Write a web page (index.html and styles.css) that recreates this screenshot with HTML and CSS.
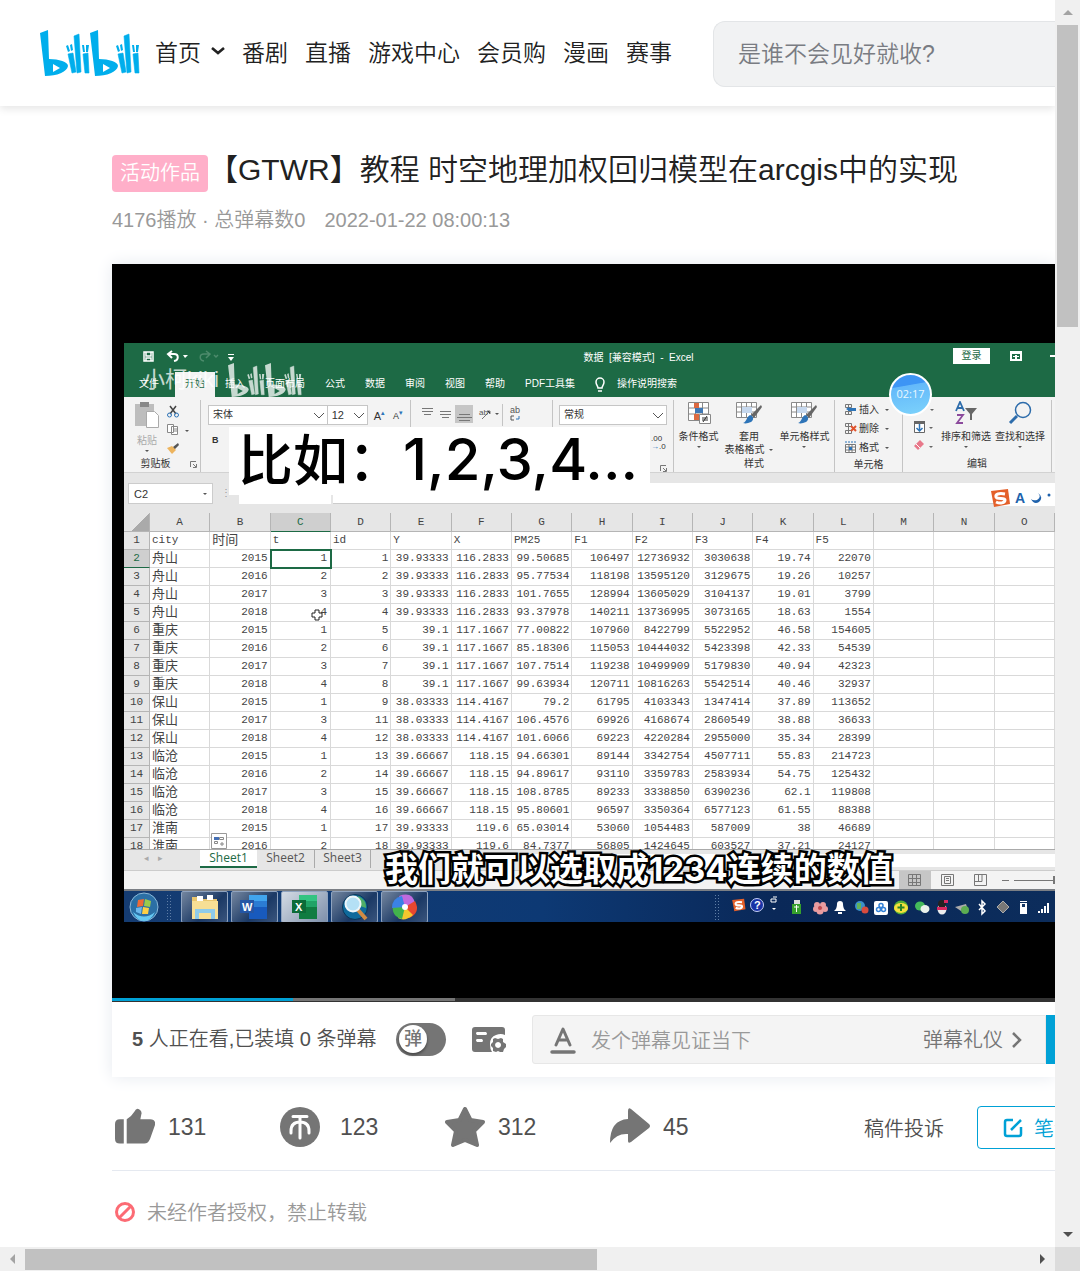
FILE: index.html
```html
<!DOCTYPE html>
<html lang="zh-CN">
<head>
<meta charset="utf-8">
<title>【GTWR】教程 时空地理加权回归模型在arcgis中的实现</title>
<link rel="stylesheet" href="styles.css">
</head>
<body>
<svg class="defs" aria-hidden="true">
  <symbol id="half-logo" viewBox="0 0 50 46">
    <path fill-rule="evenodd" d="M0 3 8 0 9 29C19 29 28 32 28 36 27 42 17 46 5 46ZM13 34v8l7-4Z"/>
    <path stroke="currentColor" stroke-width=".6" d="m28 24 5-1 3 19-4 1ZM34 6l5-2 2 38-4 1ZM43 24l5-1 1 20h-4Z"/>
    <path d="m26 16 2-1 2 6-2 1ZM30 15l2-1 1 6-2 1ZM42 15h2l1 7h-2ZM46 15h3l-1 7h-2Z"/>
  </symbol>
  <symbol id="logo" viewBox="0 0 100 46">
    <use href="#half-logo" width="50" height="46"/>
    <use href="#half-logo" x="50" width="50" height="46"/>
  </symbol>
  <symbol id="sogou" viewBox="0 0 20 20">
    <path fill="#e4602a" d="M1 3 18 1l2 15-16 3Z"/>
    <path fill="none" stroke="#fff" stroke-width="3" d="M15 6C9 5 5 6 6 9s9 0 9 3-5 4-9 2"/>
  </symbol>
  <symbol id="table-brush" viewBox="0 0 28 24">
    <path fill="#fff" stroke="#8a8a8a" d="M1.500 1.500h20v15h-20zM1 6h21M1 11h21M6.500 1v15M11.500 1v15M16.500 1v15"/>
    <path fill="#c6d8ee" d="M7 6h10v6H7z"/>
    <path fill="#666" d="m26 4 1 2-8 11-3-3Z"/><path fill="#2d74b8" d="M15 14c4 1 4 5 1 7-3 1-5 2-8 1 4-1 3-6 7-8Z"/>
  </symbol>
</svg>
<div class="window">
  <div class="viewport">
    <header class="site-header">
      <a class="logo" href="#" aria-label="bilibili"><svg width="100" height="46"><use href="#logo"/></svg></a>
      <nav class="nav">
        <a class="home" href="#">首页 <svg width="14" height="10" viewBox="0 0 14 10"><path d="m1 2 6 5 6-5" fill="none" stroke="#222" stroke-width="2.600"/></svg></a>
        <a href="#">番剧</a><a href="#">直播</a><a href="#">游戏中心</a><a href="#">会员购</a><a href="#">漫画</a><a href="#">赛事</a>
      </nav>
      <input class="search" type="text" placeholder="是谁不会见好就收?" aria-label="搜索">
    </header>
    <main>
      <h1><span class="tag">活动作品</span><span>【GTWR】教程 时空地理加权回归模型在arcgis中的实现</span></h1>
      <p class="meta"><span>4176播放 · 总弹幕数0</span><span>2022-01-22 08:00:13</span></p>
      <section class="player">
        <div class="video">
          <div class="screen">
            <div class="xl-title">
              <svg width="110" height="26" viewBox="0 0 110 26" fill="none" stroke="#fff" stroke-width="1.500">
                <path d="M20 9h9v9h-9zM22 9v4h5V9M22 18v-3h5v3"/>
                <path d="m48 8-4 3 4 4M44 11h6c5 0 5 6 0 7" stroke-width="2"/>
                <path fill="#fff" stroke="none" d="M59 12h5l-3 3zM104 14h6l-3 4zM104 11h6v1h-6z"/>
                <path stroke="#4d8b6c" d="m82 8 4 3-4 4M86 11h-6c-5 0-5 6 0 7M90 12l2 2 2-2"/>
              </svg>
              <span class="xl-name">数据&nbsp; [兼容模式] &nbsp;-&nbsp; Excel</span>
              <span class="xl-login">登录</span>
              <svg width="46" height="14" viewBox="0 0 46 14"><path fill="#fff" d="M1 2h12v10H1zM41 6h5v2h-5z"/><path fill="#1d6a45" d="M3 5h8v5H3z"/><path fill="#fff" d="M4 7h6v1H4zM6 6h2v4H6z"/></svg>
            </div>
            <div class="xl-tabs">
              <span class="file">文件</span><span class="on">开始</span><span>插入</span><span>页面布局</span><span>公式</span><span>数据</span><span>审阅</span><span>视图</span><span>帮助</span><span>PDF工具集</span>
              <svg width="22" height="16" viewBox="0 0 22 16" fill="none" stroke="#fff" stroke-width="1.500"><path d="M13 11c0-2-2-3-2-6a4 4 0 0 1 8 0c0 3-2 4-2 6ZM13 14h4"/></svg>
              <span>操作说明搜索</span>
            </div>
            <div class="ribbon">
              <div class="group clip">
                <div class="body">
                  <div class="big"><svg width="26" height="28" viewBox="0 0 26 28"><path fill="#bdbdbd" d="M1 3h19v22H1z"/><path fill="#888" d="M6 1h9v5H6z"/><path fill="#fff" stroke="#aaa" d="M12.500 10.500h8l4 4v12h-12z"/></svg><span class="dim">粘贴</span><i class="caret"></i></div>
                  <svg class="icons" width="24" height="54" viewBox="0 0 24 54"><g fill="none" stroke="#2d74b8"><path stroke="#444" stroke-width="1.500" d="m4 2 6 8M10 2 4 10"/><circle cx="3.500" cy="11" r="2"/><circle cx="10.500" cy="11" r="2"/></g><path fill="#fff" stroke="#888" d="M1.500 20.500h6v8h-6zM5.500 22.500h6v8h-6z"/><path stroke="#888" d="M7 25h4M7 27h4"/><path fill="#555" d="M19 26h4l-2 2zM7 43l5-4 1 2-5 5Z"/><path fill="#edb45e" d="m1 44 5-2 4 4-4 4Z"/></svg>
                </div>
                <div class="label">剪贴板<svg width="7" height="7" viewBox="0 0 7 7" fill="none" stroke="#777"><path d="M.5 6V.5H6M3 3l3 3M6.500 3v3.500H3"/></svg></div>
              </div>
              <div class="group font">
                <div class="line">
                  <span class="select w-font">宋体</span><span class="select w-size">12</span>
                  <b class="grow">A<sup>▴</sup></b><b class="shrink">A<sup>▾</sup></b>
                </div>
                <b class="bold">B</b>
              </div>
              <div class="group align">
                <svg width="90" height="24" viewBox="0 0 90 24"><path fill="#c6c6c6" d="M43 3h18v18H43z"/><g stroke="#777"><path d="M10 6.500h11M10 9.500h11M12 12.500h7M28 9.500h11M28 12.500h11M30 15.500h7M47 12.500h11M45 15.500h15M47 18.500h11"/><path d="m70 17 8-8m-3 0h3v3" /></g><text x="67" y="13" font-size="8" fill="#555">ab</text><path fill="#555" d="M83 11h4l-2 2z"/></svg>
                <svg class="wrap-icon" width="24" height="24" viewBox="0 0 24 24"><path stroke="#c4c4c4" d="M.5 2v22"/><text x="8" y="11" font-size="9" fill="#555">ab</text><path fill="none" stroke="#555" d="M12 14H9v4h3"/><path fill="none" stroke="#2d74b8" d="M17 14v3h-3"/></svg>
              </div>
              <div class="group number">
                <span class="select">常规</span>
                <div class="decimals"><span>.00<br><i>→</i>.0</span></div>
                <svg class="launcher" width="7" height="7" viewBox="0 0 7 7" fill="none" stroke="#777"><path d="M.5 6V.5H6M3 3l3 3M6.500 3v3.500H3"/></svg>
              </div>
              <div class="group styles">
                <div class="body">
                  <div class="big"><svg width="26" height="24" viewBox="0 0 26 24"><path fill="#fff" stroke="#888" d="M2.500 1.500h20v18h-20zM2 7h21M2 13h21M9.500 1v18M16.500 1v18"/><path fill="#dc6a41" d="M8 2h5v5H8zM8 13h5v6H8z"/><path fill="#3f78b5" d="M9 7h8v5H9z"/><path fill="#fff" stroke="#888" d="M13.500 13.500h11v9h-11z"/><path stroke="#333" d="M16 17h6M16 19h6M21 15l-4 6"/></svg><span>条件格式</span><i class="caret"></i></div>
                  <div class="big"><svg width="28" height="24"><use href="#table-brush"/></svg><span>套用</span><span>表格格式 <i class="caret"></i></span></div>
                  <div class="big"><svg width="28" height="24"><use href="#table-brush"/></svg><span>单元格样式</span><i class="caret"></i></div>
                </div>
                <div class="label">样式</div>
              </div>
              <div class="group cells">
                <div class="stack">
                  <span><svg width="13" height="13" viewBox="0 0 13 13"><path fill="none" stroke="#777" d="M1.500 1.500h6v3h-6zM1.500 8.500h6v3h-6zM4.500 1v3M4.500 8v3"/><path fill="#2d74b8" d="M2 6l3-2v4zM4 5h8v3H4z"/></svg>插入<i class="caret"></i></span>
                  <span><svg width="13" height="13" viewBox="0 0 13 13"><path fill="none" stroke="#777" d="M1.500 1.500h6v3h-6zM1.500 8.500h6v3h-6zM4.500 1v10"/><path stroke="#e0532d" stroke-width="2" d="m7 4 5 5m0-5-5 5"/></svg>删除<i class="caret"></i></span>
                  <span><svg width="13" height="13" viewBox="0 0 13 13"><path fill="#fff" stroke="#777" d="M1.500 3.500h10v8h-10zM2 6h9M2 9h9M5 3v8M8 3v8"/><path stroke="#2d74b8" stroke-dasharray="2 1" d="M1 1h11"/><path fill="#2d74b8" d="M5 6h3v3H5z"/></svg>格式<i class="caret"></i></span>
                </div>
                <div class="label">单元格</div>
              </div>
              <div class="group edit">
                <div class="body">
                  <svg class="tools" width="34" height="56" viewBox="0 0 34 56"><path fill="#fff" stroke="#666" d="M11.500 20.500h10v11h-10z"/><path fill="#666" d="M11 20h11v3H11zM27 8h4l-2 2zM26 26h4l-2 2zM26 45h4l-2 2z"/><path fill="none" stroke="#2d74b8" stroke-width="1.500" d="M16.500 23v6m-3-2 3 3 3-3"/><path fill="#e8788a" d="m11 45 6-6 4 4-6 6z"/><path stroke="#fff" d="m13 43 4 4"/></svg>
                  <div class="big"><svg width="24" height="24" viewBox="0 0 24 24" fill="none" stroke-width="1.800"><path stroke="#2d6cab" d="m2 10 4-9 4 9M3 7h6"/><path stroke="#8b4a9c" d="M3 14h6l-6 8h6"/><path fill="#666" d="M11 7h12l-5 6v6h-2v-6z"/></svg><span>排序和筛选</span><i class="caret"></i></div>
                  <div class="big"><svg width="24" height="24" viewBox="0 0 24 24" fill="none" stroke="#2d6cab"><circle cx="15" cy="9" r="7.500" stroke-width="1.500"/><path stroke-width="3" d="m9 15-7 7"/></svg><span>查找和选择</span><i class="caret"></i></div>
                </div>
                <div class="label">编辑</div>
              </div>
            </div>
            <div class="formula"><span class="cell-name">C2<i class="caret"></i></span><span class="dots">⋮</span><span class="fx"></span><span class="value"></span></div>
            <div class="sheet">
              <table>
                <thead><tr><th class="corner"><th>A<th>B<th class="sel">C<th>D<th>E<th>F<th>G<th>H<th>I<th>J<th>K<th>L<th>M<th>N<th>O</thead>
                <tbody>
                <tr class="names"><th>1<td>city<td class="zh">时间<td>t<td>id<td>Y<td>X<td>PM25<td>F1<td>F2<td>F3<td>F4<td>F5<td><td><td>
                <tr><th class="sel">2<td>舟山<td>2015<td class="picked">1<td>1<td>39.93333<td>116.2833<td>99.50685<td>106497<td>12736932<td>3030638<td>19.74<td>22070<td><td><td>
                <tr><th>3<td>舟山<td>2016<td>2<td>2<td>39.93333<td>116.2833<td>95.77534<td>118198<td>13595120<td>3129675<td>19.26<td>10257<td><td><td>
                <tr><th>4<td>舟山<td>2017<td>3<td>3<td>39.93333<td>116.2833<td>101.7655<td>128994<td>13605029<td>3104137<td>19.01<td>3799<td><td><td>
                <tr><th>5<td>舟山<td>2018<td>4<td>4<td>39.93333<td>116.2833<td>93.37978<td>140211<td>13736995<td>3073165<td>18.63<td>1554<td><td><td>
                <tr><th>6<td>重庆<td>2015<td>1<td>5<td>39.1<td>117.1667<td>77.00822<td>107960<td>8422799<td>5522952<td>46.58<td>154605<td><td><td>
                <tr><th>7<td>重庆<td>2016<td>2<td>6<td>39.1<td>117.1667<td>85.18306<td>115053<td>10444032<td>5423398<td>42.33<td>54539<td><td><td>
                <tr><th>8<td>重庆<td>2017<td>3<td>7<td>39.1<td>117.1667<td>107.7514<td>119238<td>10499909<td>5179830<td>40.94<td>42323<td><td><td>
                <tr><th>9<td>重庆<td>2018<td>4<td>8<td>39.1<td>117.1667<td>99.63934<td>120711<td>10816263<td>5542514<td>40.46<td>32937<td><td><td>
                <tr><th>10<td>保山<td>2015<td>1<td>9<td>38.03333<td>114.4167<td>79.2<td>61795<td>4103343<td>1347414<td>37.89<td>113652<td><td><td>
                <tr><th>11<td>保山<td>2017<td>3<td>11<td>38.03333<td>114.4167<td>106.4576<td>69926<td>4168674<td>2860549<td>38.88<td>36633<td><td><td>
                <tr><th>12<td>保山<td>2018<td>4<td>12<td>38.03333<td>114.4167<td>101.6066<td>69223<td>4220284<td>2955000<td>35.34<td>28399<td><td><td>
                <tr><th>13<td>临沧<td>2015<td>1<td>13<td>39.66667<td>118.15<td>94.66301<td>89144<td>3342754<td>4507711<td>55.83<td>214723<td><td><td>
                <tr><th>14<td>临沧<td>2016<td>2<td>14<td>39.66667<td>118.15<td>94.89617<td>93110<td>3359783<td>2583934<td>54.75<td>125432<td><td><td>
                <tr><th>15<td>临沧<td>2017<td>3<td>15<td>39.66667<td>118.15<td>108.8785<td>89233<td>3338850<td>6390236<td>62.1<td>119808<td><td><td>
                <tr><th>16<td>临沧<td>2018<td>4<td>16<td>39.66667<td>118.15<td>95.80601<td>96597<td>3350364<td>6577123<td>61.55<td>88388<td><td><td>
                <tr><th>17<td>淮南<td>2015<td>1<td>17<td>39.93333<td>119.6<td>65.03014<td>53060<td>1054483<td>587009<td>38<td>46689<td><td><td>
                <tr><th>18<td>淮南<td>2016<td>2<td>18<td>39.93333<td>119.6<td>84.7377<td>56805<td>1424645<td>603527<td>37.21<td>24127<td><td><td>
                </tbody>
              </table>
            </div>
            <div class="sheet-tabs"><span class="arrows">◂&emsp;▸</span><span class="on">Sheet1</span><span>Sheet2</span><span class="bar">Sheet3</span><span class="hscroll"></span></div>
            <div class="status">
              <svg width="156" height="18" viewBox="0 0 156 18" fill="none" stroke="#777"><path fill="#c6c6c6" stroke="none" d="M0 0h32v18H0z"/><path d="M9.500 3.500h12v11h-12zM9 7.500h12M9 11.500h12M13.500 3v11M17.500 3v11M42.500 3.500h12v11h-12zM45.500 5.500h6v7h-6zM47 7.500h3M47 9.500h3M75.500 3.500h12v11h-12zM75 10.500h8v-7M79.500 3v7M103 9.500h7M115 9.500h41"/><path stroke-width="2" d="M155 5v8"/></svg>
            </div>
            <div class="taskbar">
              <svg class="start" width="42" height="32" viewBox="0 0 42 32"><circle cx="20" cy="16" r="14" fill="#2b6fa5" stroke="#8bb8d8"/><path fill="#64c8f2" d="M9 21q11 9 22 0-4 9-11 9T9 21"/><path fill="#ef6a35" d="m14 9 6-1-1 7-6 1z"/><path fill="#9bcb4a" d="m21 8 6 2-1 6-6-1z"/><path fill="#6cb8ec" d="m12 17 6-1-1 7-5-2z"/><path fill="#fbcf45" d="m19 16 6 1-1 6-6 0z"/></svg>
              <span class="grip"></span>
              <span class="app"><svg width="32" height="28" viewBox="0 0 32 28"><path fill="#e9c66e" d="M3 4h7l2 2h16v20H3z"/><path fill="#fff" d="M8 3h6v5H8zM18 2h6v5h-6z"/><path fill="#f7df95" d="M3 8h26v18H3z"/><path fill="#8ecbea" d="M6 26V16h20v10h-4v-6H10v6z"/></svg></span>
              <span class="app"><svg width="32" height="28" viewBox="0 0 32 28"><path fill="#41a5ee" d="M10 2h18v6H10z"/><path fill="#2b7cd3" d="M10 8h18v6H10z"/><path fill="#185abd" d="M10 14h18v12H10z"/><path fill="#2456a5" d="M1 7h14v13H1z"/><text x="3" y="18" fill="#fff" font-size="11" font-weight="700">W</text></svg></span>
              <span class="app active"><svg width="32" height="28" viewBox="0 0 32 28"><path fill="#33c481" d="M10 2h18v6H10z"/><path fill="#21a366" d="M10 8h18v6H10z"/><path fill="#107c41" d="M10 14h18v12H10z"/><path fill="#0c6b38" d="M3 7h14v13H3z"/><text x="6" y="18" fill="#fff" font-size="11" font-weight="700">X</text></svg></span>
              <span class="app"><svg width="32" height="28" viewBox="0 0 32 28"><circle cx="16" cy="14" r="12.500" fill="#0f6a9c" stroke="#0b3558"/><path fill="#4fae67" d="M19 3q9 4 8 12l-6-2z"/><path stroke="#d18b45" stroke-width="4" d="m19 17 8 9"/><circle cx="14" cy="11" r="7.500" fill="#b4e0f5" stroke="#eef6fa" stroke-width="2"/></svg></span>
              <span class="app"><svg width="32" height="28" viewBox="0 0 32 28"><path fill="#c06adf" d="M10 3q14-5 16 8L16 14z"/><path fill="#e8472f" d="M26 8q6 12-6 17l-4-11z"/><path fill="#f6c72e" d="M24 22q-8 7-15 3l7-11z"/><path fill="#42b34c" d="M13 26Q2 23 4 12l12 2z"/><path fill="#3b82e6" d="M3 15Q3 5 13 3l3 11z"/><circle cx="16" cy="14" r="3" fill="#fff"/></svg></span>
              <span class="space"></span>
              <span class="grip small"></span>
              <svg class="tray" width="328" height="32" viewBox="0 0 328 32">
                <use href="#sogou" x="4" y="7" width="15" height="14"/>
                <circle cx="30" cy="14" r="6.500" fill="#1933a6" stroke="#c7d0f5"/><text x="27" y="18" fill="#fff" font-size="11" font-weight="700">?</text>
                <path fill="none" stroke="#fff" d="M44 8h5v3h-5zM46 6h4"/><path fill="#fff" d="M45 17h4l-2 2z"/>
                <path fill="#36a02c" d="M65 13h9v10h-9z"/><path fill="#ddd" d="M67 9h6v4h-6z"/><path stroke="#fff" d="M69.500 14v7M67 16h5"/>
                <g fill="#ea9ca0"><circle cx="90" cy="14" r="3"/><circle cx="96" cy="14" r="3"/><circle cx="98" cy="18" r="3"/><circle cx="93" cy="20" r="3.500"/><circle cx="89" cy="18" r="3"/></g><circle cx="93" cy="17" r="2" fill="#c2484d"/>
                <path fill="#fff" d="M107 20q3-2 3-7 0-3 3-3t3 3q0 5 3 7zM111 21h4v2h-4z"/>
                <circle cx="133" cy="15" r="5" fill="#3c91c9"/><path fill="#62b359" d="M130 12h4v6h-4z"/><circle cx="138" cy="19" r="3.500" fill="#d94b3d"/>
                <rect x="147" y="10" width="14" height="14" rx="2" fill="#fff"/><g fill="none" stroke="#3381d7" stroke-width="1.500"><circle cx="154" cy="14.500" r="2"/><circle cx="151.500" cy="18.500" r="2"/><circle cx="156.500" cy="18.500" r="2"/></g>
                <circle cx="174" cy="16.500" r="7" fill="#52ad36"/><ellipse cx="174" cy="17" rx="7" ry="5" fill="#f4df3c"/><path stroke="#278329" stroke-width="2" d="M174 13v7M170.500 16.500h7"/>
                <ellipse cx="193" cy="15" rx="5" ry="4.500" fill="#45ba5b"/><ellipse cx="198" cy="18" rx="4.500" ry="4" fill="#eaf2eb"/>
                <ellipse cx="215" cy="18" rx="4.500" ry="5.500" fill="#ededed"/><circle cx="215" cy="13" r="4" fill="#222"/><path fill="#d82960" d="M210 16h10v3h-10zM217 9h4v3h-4z"/>
                <path fill="#aaa" d="m228 16 11-3 1 3-6 4z"/><circle cx="238" cy="19" r="4" fill="#5dad51"/>
                <path fill="none" stroke="#fff" stroke-width="1.500" d="m252 13 6 7-3 3V10l3 3-6 6"/>
                <path fill="#777" stroke="#aaa" d="m276 10 6 6-6 6-6-6z"/>
                <path fill="#fff" d="M293 12h7v11h-7zM293 10h7v1h-7z"/><path fill="#173864" d="M295 13h3v3h-3z"/>
                <path fill="#fff" d="M311 20h2v2h-2zM314 18h2v4h-2zM317 15h2v7h-2zM320 12h2v10h-2z"/>
              </svg>
            </div>
            <div class="watermark"><span>小柯kiki</span><svg width="74" height="34"><use href="#logo"/></svg></div>
            <div class="ball">02:17</div>
            <div class="note-text">比如：<span>1,2,3,4...</span></div>
            <div class="ime"><svg width="20" height="20"><use href="#sogou"/></svg><b>A</b><svg width="22" height="12" viewBox="0 0 22 12"><path fill="#2062ac" d="M8 1q4 4-1 7-4 1-6-1 3 6 8 3 5-5-1-9Z"/><circle cx="19" cy="3" r="1.500" fill="#2062ac"/></svg></div>
            <svg class="fill-options" width="16" height="16" viewBox="0 0 16 16"><path fill="#fff" stroke="#999" d="M.5.5h15v15H.5z"/><path fill="#4670b5" d="M3 4h5v3H3z"/><path fill="none" stroke="#888" d="M8.500 4.500h4v2h-4zM3.500 8.500h3v2h-3zM11 9v4M9 11h4"/></svg>
            <svg class="cursor" width="12" height="12" viewBox="0 0 12 12"><path fill="#fff" stroke="#222" d="M4 1h4v3h3v4H8v3H4V8H1V4h3z"/></svg>
            <div class="subtitle">我们就可以选取成1234连续的数值</div>
          </div>
        </div>
        <div class="progress"><span class="loaded"></span><span class="played"></span></div>
        <div class="send-row">
          <p class="watching"><b>5</b> 人正在看,已装填 0 条弹幕</p>
          <label class="toggle"><input type="checkbox" aria-label="弹幕开关"><span>弹</span></label>
          <button class="icon-button" aria-label="弹幕设置"><svg width="36" height="30" viewBox="0 0 36 30"><path fill="#757575" fill-rule="evenodd" d="M4 2h27q3 0 3 3v5q-4-2-9 0-6 2-6 9 0 5 2 8H4q-3 0-3-3V5q0-3 3-3Zm2 5q-2 1 0 3h9q2-1 0-3Zm0 7q-2 1 0 3h5q2-1 0-3Z"/><path fill="#757575" fill-rule="evenodd" d="m24 13 3 1 3-1 2 1v3l3 2v3l-2 2-1 3h-3l-2-1-2 1-3-1v-3l-2-2v-2l2-2v-3Zm3 4a3 3 0 1 0 .1 0Z"/></svg></button>
          <div class="send-box">
            <svg width="26" height="28" viewBox="0 0 26 28" fill="none" stroke="#757575" stroke-linecap="round" stroke-linejoin="round"><path stroke-width="3" d="m6 19 7-16 7 16M9 14h8"/><path stroke-width="3.500" d="M2 26h22"/></svg>
            <input type="text" placeholder="发个弹幕见证当下" aria-label="弹幕内容">
            <a href="#">弹幕礼仪 <svg width="12" height="18" viewBox="0 0 12 18"><path d="m2 2 7 7-7 7" fill="none" stroke="#757575" stroke-width="2.500"/></svg></a>
          </div>
          <button class="send" aria-label="发送"></button>
        </div>
      </section>
      <div class="actions">
        <button class="action"><svg width="40" height="42" viewBox="0 0 41 42"><path fill="#757575" d="M5 12h4v25H5q-5 0-5-5V17q0-5 5-5ZM12 37V12q5-3 8-8 2-4 5-2 3 2 2 5l-1 5h10q6 0 5 6l-5 14q-2 5-6 5Z"/></svg>131</button>
        <button class="action coin"><svg width="40" height="42" viewBox="0 0 40 42"><circle cx="20" cy="20" r="20" fill="#757575"/><path fill="none" stroke="#fff" stroke-width="3" stroke-linecap="round" d="M13 9.500h14M20 10v21M11 26v-2q0-9 9-9t9 9v2"/></svg>123</button>
        <button class="action"><svg width="40" height="42" viewBox="0 0 40 42"><path fill="#757575" stroke="#757575" stroke-width="4" stroke-linejoin="round" d="m20 2 5.500 11L38 15l-9 9 3 14-12-5-12 5 3-14-9-9 12.500-2Z"/></svg>312</button>
        <button class="action"><svg width="40" height="42" viewBox="0 0 40 42"><path fill="#757575" d="M0 36Q0 13 18 12V4q0-4 3-2l18 15q2 2 0 4L21 35q-3 2-3-1v-7Q7 26 0 36Z"/></svg>45</button>
        <a class="report" href="#">稿件投诉</a>
        <button class="note"><svg width="20" height="20" viewBox="0 0 20 20" fill="none" stroke="#00a1d6" stroke-width="2.500"><path d="M10 2H4Q2 2 2 4v12q0 2 2 2h12q2 0 2-2V9M8 12 18 2"/></svg>笔记</button>
      </div>
      <p class="notice"><svg width="20" height="20" viewBox="0 0 20 20" fill="none" stroke="#fc6b74" stroke-width="3"><circle cx="10" cy="10" r="8.500"/><path d="m4 16 12-12"/></svg>未经作者授权，禁止转载</p>
    </main>
  </div>
  <div class="vbar"><i class="up"></i><span class="thumb"></span><i class="down"></i></div>
  <div class="hbar"><i class="left"></i><span class="thumb"></span><i class="right"></i></div>
  <div class="bar-corner"></div>
</div>
</body>
</html>
```
FILE: styles.css
```css
* { box-sizing: border-box; }
body {
  margin: 0;
  background: #fff;
  color: #212121;
  font-family: "Liberation Sans", "Noto Sans CJK SC", sans-serif;
  font-weight: 350;
}
a { color: inherit; text-decoration: none; }
button, input { font: inherit; color: inherit; }
button { padding: 0; border: 0; background: none; cursor: pointer; }
p, h1 { margin: 0; font-weight: 350; }
svg { display: block; flex: none; }
i { font-style: normal; }
.defs { position: absolute; width: 0; height: 0; }

.window {
  display: grid;
  grid-template: minmax(0, 1fr) 24px / minmax(0, 1fr) 25px;
  height: 100vh;
}
.viewport { overflow: hidden; white-space: nowrap; }

/* header */
.site-header {
  display: flex;
  align-items: center;
  height: 106px;
  padding-left: 40px;
  box-shadow: 0 3px 8px rgba(0, 0, 0, .1);
}
.logo { color: #00aeec; fill: currentColor; }
.nav { display: flex; flex: none; gap: 17px; margin-left: 15px; padding-bottom: 4px; font-size: 23px; }
.home { display: flex; align-items: center; gap: 10px; }
.search {
  flex: 1;
  min-width: 0;
  height: 66px;
  margin: 2px 0 0 41px;
  padding: 0 24px;
  border: 1px solid #e3e5e7;
  border-right: 0;
  border-radius: 12px 0 0 12px;
  background: #f1f2f3;
  font-size: 23px;
}
.search::placeholder { color: #797c82; opacity: 1; }

/* title */
main { padding: 46px 0 0 112px; }
h1 { display: flex; align-items: center; height: 42px; font-size: 30px; line-height: 36px; }
h1 span:last-child { padding-bottom: 6px; }
.tag {
  height: 37px;
  padding: 0 8px;
  border-radius: 4px;
  background: #ffafc9;
  color: #fff;
  font-size: 20px;
  line-height: 37px;
}
.meta { display: flex; gap: 19px; height: 30px; margin: 11px 0 29px; color: #999; font-size: 20px; line-height: 30px; }

/* player */
.player { box-shadow: 0 0 16px #e5e9ef; background: #fff; }
.video { height: 734px; padding: 79px 0 0 12px; background: #000; }
.screen { position: relative; height: 579px; overflow: hidden; background: #e6e6e6; color: #333; font-size: 10px; font-weight: 400; }
.caret { display: inline-block; border: 2px solid transparent; border-top-color: #555; border-bottom: 0; }

.xl-title { display: flex; align-items: center; height: 29px; padding-bottom: 3px; background: #1d6a45; color: #fff; }
.xl-name { flex: 1; padding-left: 90px; text-align: center; }
.xl-login { width: 37px; height: 16px; margin-right: 19px; background: #fff; color: #1d6a45; line-height: 16px; text-align: center; }
.xl-tabs { display: flex; align-items: center; height: 25px; padding-left: 5px; background: #1d6a45; color: #fff; line-height: 23px; }
.xl-tabs span { height: 25px; padding: 0 10px; }
.xl-tabs .file { margin-right: 6px; }
.xl-tabs .on { background: #f3f3f3; color: #1d6a45; }

.ribbon { display: flex; height: 76px; padding-top: 3px; background: #f3f3f3; border-bottom: 1px solid #d2d2d2; }
.group { display: flex; flex: none; flex-direction: column; height: 72px; border-right: 1px solid #c4c4c4; }
.group .body { display: flex; flex: 1; justify-content: center; min-height: 0; padding-top: 1px; }
.label { display: flex; flex: none; align-items: center; justify-content: center; height: 16px; line-height: 16px; }
.big { display: flex; flex-direction: column; align-items: center; line-height: 13px; }
.big svg { margin-bottom: 5px; }
.big .caret { margin-top: 3px; }
.big span .caret { margin: 0 0 2px 2px; }
.dim { color: #aaa; }
.clip { width: 77px; }
.clip .icons { margin: 3px 0 0 6px; }
.clip .label { gap: 19px; padding-left: 13px; }
.font { width: 210px; padding: 5px 7px; }
.line { display: flex; align-items: center; height: 20px; }
.select {
  height: 20px;
  padding: 0 4px;
  border: 1px solid #c6c6c6;
  background: #fff url("data:image/svg+xml,%3Csvg xmlns='http://www.w3.org/2000/svg' width='12' height='7'%3E%3Cpath d='M1 1l5 5 5-5' fill='none' stroke='%23555'/%3E%3C/svg%3E") no-repeat right 2px center;
  line-height: 18px;
}
.w-font { width: 120px; }
.w-size { width: 40px; border-left: 0; font-size: 11px; }
.line b { margin-left: 6px; font-size: 11px; font-weight: 400; }
.line .shrink { margin-left: 8px; font-size: 9px; }
.line sup { color: #2d74b8; font-size: 7px; }
.bold { margin: 10px 0 0 4px; font-size: 9px; }
.align { flex-direction: row; width: 142px; padding: 2px 0 0 1px; }
.decimals i { color: #2d74b8; }
.number { width: 121px; padding: 5px 6px; }
.decimals { padding: 10px 0 0 92px; font-size: 8px; line-height: 8px; }
.launcher { margin: 14px 0 0 101px; }
.styles { width: 161px; }
.styles .body { gap: 6px; }
.cells { width: 68px; }
.stack { display: flex; flex: 1; flex-direction: column; padding-left: 9px; }
.stack span { display: flex; align-items: center; gap: 2px; height: 19px; line-height: 16px; }
.stack .caret { margin-left: 4px; }
.edit { width: 149px; }
.edit .body { gap: 4px; justify-content: flex-start; }

.formula { display: flex; height: 40px; padding: 10px 0 9px 4px; line-height: 20px; }
.cell-name { display: flex; align-items: center; justify-content: space-between; width: 85px; padding: 0 5px; border: 1px solid #ccc; background: #fff; font-size: 11px; }
.dots { width: 26px; color: #999; text-align: center; }
.fx { width: 92px; margin-right: 2px; background: #fff; }
.value { flex: 1; border-bottom: 1px solid #ccc; background: #fff; }

.sheet { height: 336px; overflow: hidden; background: #fff; }
table { width: 100%; table-layout: fixed; border-collapse: separate; border-spacing: 0; font: 11px/17px "Liberation Mono", "Noto Sans CJK SC", monospace; color: #444; }
th, td { height: 18px; padding: 0 2px; border: solid #d9d9d9; border-width: 0 1px 1px 0; line-height: 17px; text-align: right; }
th { border-color: #b5b5b5; background: #e6e6e6; font-weight: 400; text-align: center; }
thead th { height: 19px; }
.corner { width: 26px; background: linear-gradient(135deg, #e6e6e6 60%, #aaa 60%); }
th.sel { border-bottom-color: #1d6a45; background: #cfcfcf; color: #1d6a45; }
td:nth-child(2) { text-align: left; font-size: 13px; }
td:nth-child(4) { padding-right: 3px; }
.names td { text-align: left; font-size: 11px; }
.names .zh { font-size: 13px; }
.picked { outline: 2px solid #1d6a45; outline-offset: -1px; }

.sheet-tabs { display: flex; height: 22px; border-top: 1px solid #aaa; border-bottom: 1px solid #ccc; font: 12px/16px "Open Sans", sans-serif; color: #555; }
.arrows { width: 76px; padding-left: 20px; color: #aaa; font-size: 9px; }
.sheet-tabs > span:not(.arrows):not(.hscroll) { width: 57px; height: 18px; text-align: center; }
.sheet-tabs .on { border-bottom: 2px solid #1d6a45; background: #fff; color: #1d6a45; }
.sheet-tabs .bar { border: solid #aaa; border-width: 0 1px; }
.hscroll { flex: 1; height: 13px; margin: 4px 0 0 160px; background: #fff; }
.status { display: flex; justify-content: flex-end; height: 20px; border-bottom: 2px solid #7b7f85; background: #f3f3f3; }
.taskbar { display: flex; align-items: center; height: 32px; background: linear-gradient(90deg, #153c72, #0d3974 45%, #0a2858 70%, #0c2d5c); }
.grip { width: 6px; height: 26px; margin-right: 9px; background: radial-gradient(#5f7ea6 1px, transparent 1px) 0 0 / 3px 3px; }
.grip.small { margin-right: 7px; }
.app { display: flex; align-items: center; justify-content: center; width: 47px; height: 32px; margin-right: 3px; border: 1px solid #8fa3bf; border-radius: 2px; background: linear-gradient(135deg, #74869f, #1b3965 60%, #3a557d); }
.app.active { background: linear-gradient(135deg, #d4dbe4, #7e90ab); }
.space { flex: 1; }

.watermark { position: absolute; top: 20px; left: 19px; display: flex; align-items: center; gap: 9px; color: #fff; fill: #fff; font-size: 22px; line-height: 34px; opacity: .75; }
.ball { position: absolute; top: 30px; left: 765px; width: 43px; height: 43px; border: 2px solid #fff; border-radius: 50%; background: linear-gradient(170deg, #3d95f5 28%, #64b9fa 30%, #7cd2fb); color: #e9f8ff; font: 11px/38px "Open Sans", sans-serif; text-align: center; }
.note-text { position: absolute; top: 84px; left: 105px; width: 421px; height: 68px; padding-left: 9px; background: #fff; color: #000; font: 500 55px/64px Inter, "Noto Sans CJK SC", sans-serif; }
.note-text span { font-size: 58px; }
.ime { position: absolute; top: 145px; right: 0; display: flex; align-items: center; gap: 5px; width: 65px; background: linear-gradient(#fff, #fff) 10px 2px / 100% 16px no-repeat; color: #2062ac; font-size: 14px; }
.fill-options { position: absolute; top: 490px; left: 87px; }
.cursor { position: absolute; top: 266px; left: 187px; }
.subtitle { position: absolute; top: 505px; left: 261px; color: #fff; font: 700 33px/42px Inter, "Noto Sans CJK SC", sans-serif; -webkit-text-stroke: 5px #000; paint-order: stroke fill; }

.progress { display: grid; height: 4px; background: #333; }
.progress span { grid-area: 1 / 1; height: 3px; }
.played { width: 181px; background: #00a1d6; }
.loaded { width: 343px; background: #757575; }

.send-row { display: flex; align-items: center; height: 75px; padding-left: 20px; color: #505050; font-size: 20px; line-height: 30px; }
.watching { width: 264px; padding-bottom: 2px; }
.watching b { font-weight: 700; }
.toggle { display: flex; width: 50px; height: 33px; padding: 2px 3px; border-radius: 17px; background: #757575; }
.toggle input { position: absolute; opacity: 0; }
.toggle span { width: 28px; height: 28px; border-radius: 50%; background: #fff; box-shadow: 0 2px 3px rgba(0, 0, 0, .4); color: #757575; font-size: 18px; font-weight: 500; line-height: 28px; text-align: center; }
.icon-button { margin: 0 25px; }
.send-box { display: flex; flex: 1; align-items: center; min-width: 0; height: 49px; padding: 0 22px 0 17px; border: 1px solid #e7e7e7; border-radius: 3px 0 0 3px; background: #f4f4f4; color: #757575; }
.send-box input { flex: 1; min-width: 0; padding: 2px 0 0; margin-left: 15px; border: 0; background: none; }
.send-box input::placeholder { color: #999; opacity: 1; }
.send-box a { display: flex; align-items: center; gap: 8px; }
.send { width: 9px; height: 49px; background: #00a1d6; }

.actions { display: flex; align-items: center; height: 94px; padding: 8px 0 0 3px; border-bottom: 1px solid #e5e9f0; color: #505050; }
.action { display: flex; flex: none; align-items: center; gap: 13px; width: 165px; font-size: 23px; }
.coin { gap: 20px; }
.report { margin-left: auto; font-size: 20px; }
.note { display: flex; flex: none; align-items: center; gap: 11px; width: 130px; height: 43px; margin: 0 -52px 0 33px; padding-left: 25px; border: 1px solid #00a1d6; border-radius: 4px; color: #00a1d6; font-size: 20px; }
.notice { display: flex; align-items: center; gap: 12px; padding: 26px 0 0 3px; color: #999; font-size: 20px; }

/* scroll bars */
.vbar, .hbar { display: flex; background: #f0f0f0; }
.vbar { flex-direction: column; align-items: center; padding: 10px 0; }
.hbar { grid-row: 2; align-items: center; padding: 0 10px; }
.bar-corner { background: #dcdcdc; }
.thumb { background: #c1c1c1; }
.vbar .thumb { width: 21px; height: calc(25% - 5px); margin: 10px 0 auto; }
.hbar .thumb { width: calc(55% + 3px); height: 21px; margin: 0 auto 0 10px; }
.vbar i, .hbar i { border: 5px solid transparent; }
.vbar .up { border-top: 0; border-bottom-color: #a3a3a3; }
.vbar .down { border-bottom: 0; border-top-color: #505050; }
.hbar .left { border-left: 0; border-right-color: #a3a3a3; }
.hbar .right { border-right: 0; border-left-color: #505050; }
```
